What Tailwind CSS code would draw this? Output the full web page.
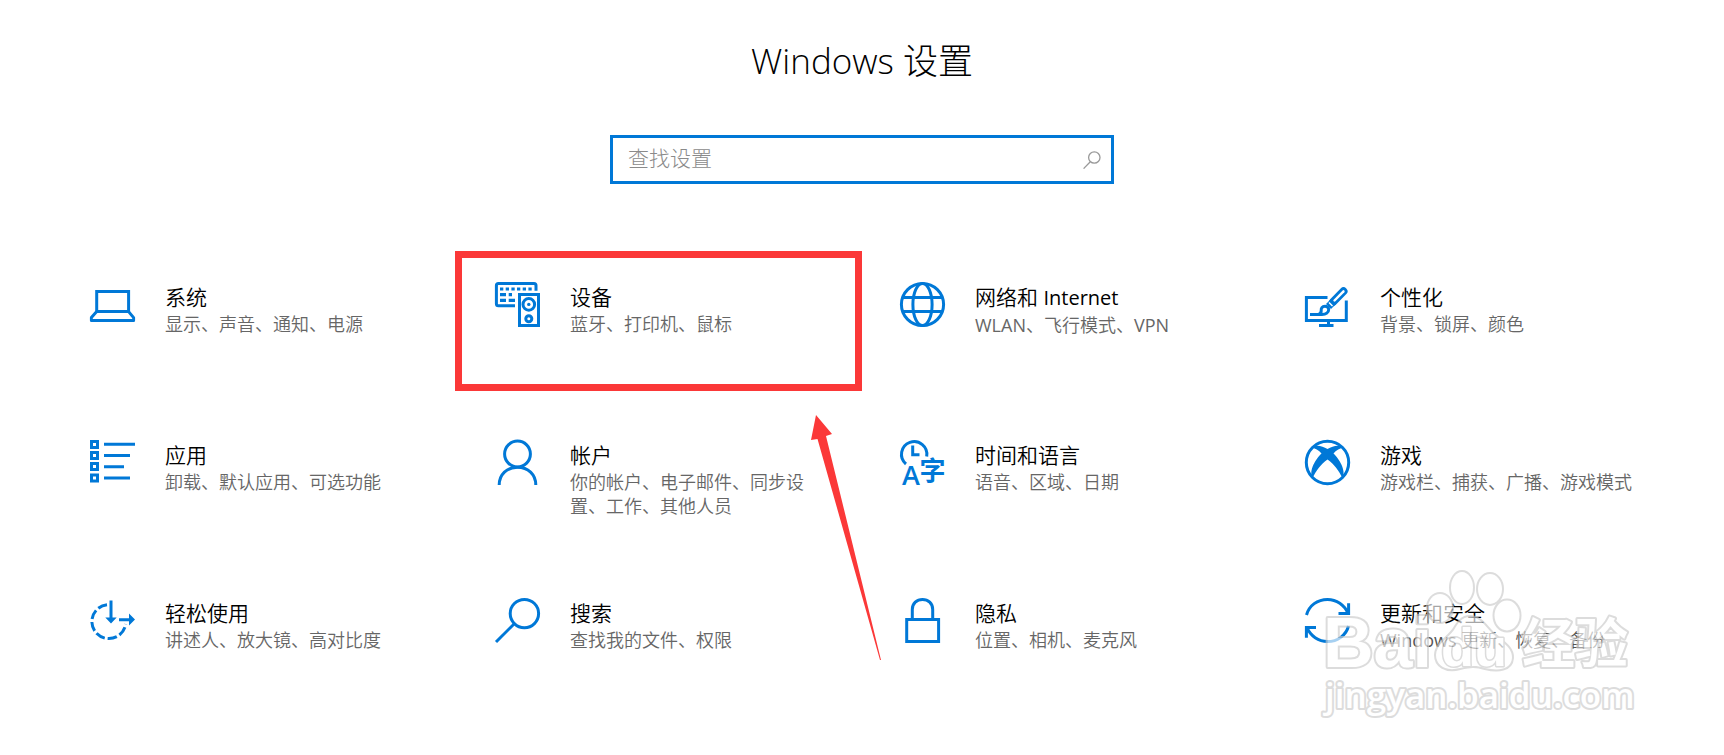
<!DOCTYPE html>
<html lang="zh-CN">
<head>
  <meta charset="utf-8"/>
  <meta name="viewport" content="width=device-width,initial-scale=1.0"/>
  <title>Windows 设置</title>
  <script src="https://cdn.jsdelivr.net/npm/@tailwindcss/browser@4"></script>
  <style>
    body { font-family: "Open Sans", "Noto Sans CJK SC", sans-serif; }
    .icon { width: 45px; height: 45px; flex: none; fill: none; stroke: #0078d7; stroke-width: 3; overflow: visible; }
  </style>
</head>
<body class="bg-white text-black min-h-screen overflow-x-hidden">
  <main class="pt-9">
    <h1 class="text-center text-[35px] leading-[50px] font-light">Windows 设置</h1>

    <form class="relative w-[504px] max-w-full mx-auto mt-[49px]">
      <input type="search" aria-label="查找设置" placeholder="查找设置" class="block w-full h-[49px] border-3 border-[#0078d7] bg-white pl-[15px] pr-12 pb-[3px] text-[21px] font-light outline-none placeholder:text-[#8a8a8a]"/>
      <button type="submit" aria-label="查找" class="absolute right-[13px] top-4">
        <svg class="w-[18px] h-[18px]" viewBox="0 0 18 18" fill="none" stroke="#999" stroke-width="1.3"><circle cx="11.3" cy="6.5" r="5.7"/><path d="M7.3 10.8L.6 17.6"/></svg>
      </button>
    </form>

    <nav class="mt-[67px] pl-[50px] pr-[54px] grid grid-cols-4 gap-y-[18px]">
      <a href="#system" class="flex gap-[30px] h-[140px] pt-[31px] pl-10 pr-[50px]">
        <svg class="icon" viewBox="0 0 45 45" stroke-linejoin="round"><path stroke-linejoin="miter" d="M6.7 9.4H38.6V29.6H6.7Z"/><path d="M6.7 29.6L1.4 35.6V38.4H43.6V35.6L38.6 29.6"/></svg>
        <div class="pt-px">
          <h2 class="text-[21px] leading-7 font-[350]">系统</h2>
          <p class="text-[18px] leading-6 font-[350] text-[#666] pt-px">显示、声音、通知、电源</p>
        </div>
      </a>

      <a href="#devices" class="relative flex gap-[30px] h-[140px] pt-[31px] pl-10 pr-[50px]">
        <!-- marco y flecha -->
        <span class="absolute inset-y-0 left-0 -right-0.5 border-7 border-[#fb3838]"></span>
        <svg class="absolute left-[355px] top-[163px] w-[72px] h-[246px] z-10" viewBox="0 0 72 246" fill="#fb3838"><path d="M6 1L22 20L16 22L71 246L70 246L7.5 25L1 26Z"/></svg>
        <svg class="icon" viewBox="0 0 45 45">
          <path d="M20 23.7H3.4Q1.4 23.7 1.4 21.7V3.4Q1.4 1.4 3.4 1.4H39Q41 1.4 41 3.4V8.7"/>
          <path stroke-width="3.2" d="M5 7H8.3M10.7 7H14M16.4 7H19.7M22 7H25.3M27.7 7H31M33.4 7H36.7M5 12.7H11M13.7 12.7H17M5 18.4H11M13.7 18.4H20"/>
          <path d="M24.5 12.5H43.5V43.5H24.5Z"/>
          <circle cx="33.8" cy="22.4" r="5.8"/><circle cx="33.8" cy="22.4" r="1.7" fill="#0078d7" stroke="none"/>
          <circle cx="33.8" cy="36.7" r="3"/>
        </svg>
        <div class="pt-px">
          <h2 class="text-[21px] leading-7 font-[350]">设备</h2>
          <p class="text-[18px] leading-6 font-[350] text-[#666] pt-px">蓝牙、打印机、鼠标</p>
        </div>
      </a>

      <a href="#network" class="flex gap-[30px] h-[140px] pt-[31px] pl-10 pr-[50px]">
        <svg class="icon" viewBox="0 0 45 45"><circle cx="22.5" cy="22.5" r="21.1"/><ellipse cx="22.5" cy="22.5" rx="9.6" ry="21.1"/><path d="M2.7 15.4H42.3M2.7 29.6H42.3"/></svg>
        <div class="pt-px">
          <h2 class="text-[21px] leading-7 font-[350]">网络和 <span class="text-[20px] font-normal">Internet</span></h2>
          <p class="text-[18px] leading-6 font-[350] text-[#666] pt-px"><span class="font-normal">WLAN</span>、飞行模式、<span class="font-normal">VPN</span></p>
        </div>
      </a>

      <a href="#personalization" class="flex gap-[30px] h-[140px] pt-[31px] pl-10 pr-[50px]">
        <svg class="icon" viewBox="0 0 45 45">
          <path d="M22.5 15.4H1.4V38.6H41.3V18.5M23.5 38.6V43.5M14 43.5H28.5"/>
          <path stroke-width="8" stroke-linecap="round" d="M38.5 9.3L28 20"/><path stroke-width="7" d="M28.5 19.5L23.5 24.5"/>
          <path stroke="#fff" stroke-width="2.4" stroke-linecap="round" d="M38.5 9.3L29.5 18.5"/>
          <path stroke="#fff" stroke-width="1.5" d="M24 20.5L27.5 24"/>
          <path d="M5 32.4H17C21 32.4 23.7 30.5 23.7 27.5C23.7 25.5 22 24.2 20 24.2C17 24.2 16 26.5 16.2 28.5C16.3 30.5 15.5 31.8 13.5 32.4"/>
        </svg>
        <div class="pt-px">
          <h2 class="text-[21px] leading-7 font-[350]">个性化</h2>
          <p class="text-[18px] leading-6 font-[350] text-[#666] pt-px">背景、锁屏、颜色</p>
        </div>
      </a>

      <a href="#apps" class="flex gap-[30px] h-[140px] pt-[31px] pl-10 pr-[50px]">
        <svg class="icon" viewBox="0 0 45 45"><path d="M1.5 1.5H7.5V7.5H1.5ZM1.5 12.5H7.5V18.5H1.5ZM1.5 23.5H7.5V29.5H1.5ZM1.5 35H7.5V41H1.5ZM14 4.3H45M14 15.5H40M14 26.7H34M14 38H40"/></svg>
        <div class="pt-px">
          <h2 class="text-[21px] leading-7 font-[350]">应用</h2>
          <p class="text-[18px] leading-6 font-[350] text-[#666] pt-px">卸载、默认应用、可选功能</p>
        </div>
      </a>

      <a href="#accounts" class="flex gap-[30px] h-[140px] pt-[31px] pl-10 pr-[50px]">
        <svg class="icon" viewBox="0 0 45 45"><circle cx="22.5" cy="14" r="12.9"/><path d="M4.2 45C4.2 34.5 12 27.2 22.5 27.2S40.8 34.5 40.8 45"/></svg>
        <div class="pt-px">
          <h2 class="text-[21px] leading-7 font-[350]">帐户</h2>
          <p class="text-[18px] leading-6 font-[350] text-[#666] pt-px">你的帐户、电子邮件、同步设置、工作、其他人员</p>
        </div>
      </a>

      <a href="#time" class="flex gap-[30px] h-[140px] pt-[31px] pl-10 pr-[50px]">
        <svg class="icon" viewBox="0 0 45 45">
          <path d="M6 24A12.7 12.7 0 1 1 26.7 16.5"/><path d="M12.7 5.5V14.7H19.5"/>
          <g fill="#0078d7" stroke="none"><text x="2" y="45" font-size="27" font-family="Open Sans" font-weight="600">A</text><text x="19.5" y="40" font-size="26" font-family="Noto Sans CJK SC" font-weight="700">字</text></g>
        </svg>
        <div class="pt-px">
          <h2 class="text-[21px] leading-7 font-[350]">时间和语言</h2>
          <p class="text-[18px] leading-6 font-[350] text-[#666] pt-px">语音、区域、日期</p>
        </div>
      </a>

      <a href="#gaming" class="flex gap-[30px] h-[140px] pt-[31px] pl-10 pr-7">
        <svg class="icon" viewBox="0 0 45 45"><circle cx="22.5" cy="22.5" r="21.2"/><path fill="#0078d7" stroke="none" d="M6 8C11 4 17 6 22.5 9C28 6 34 4 39 8C35 8 31 10 28.5 13.5C34 19 41.5 30 37.5 38C34 31 29 24 22.5 19.5C16 24 11 31 7.5 38C3.5 30 11 19 16.5 13.5C14 10 10 8 6 8Z"/></svg>
        <div class="pt-px">
          <h2 class="text-[21px] leading-7 font-[350]">游戏</h2>
          <p class="text-[18px] leading-6 font-[350] text-[#666] pt-px">游戏栏、捕获、广播、游戏模式</p>
        </div>
      </a>

      <a href="#ease" class="flex gap-[30px] h-[140px] pt-[31px] pl-10 pr-[50px]">
        <svg class="icon" viewBox="0 0 45 45">
          <path stroke-dasharray="9.5 3" d="M17 6.7A17 17 0 1 0 35.7 26"/>
          <path d="M21 2.5V22M29 21.7H41"/>
          <path fill="#0078d7" stroke="none" d="M15.3 19.5L21 25.5L26.7 19.5ZM39 15.5L45 21.5L39 27.5Z"/>
        </svg>
        <div class="pt-px">
          <h2 class="text-[21px] leading-7 font-[350]">轻松使用</h2>
          <p class="text-[18px] leading-6 font-[350] text-[#666] pt-px">讲述人、放大镜、高对比度</p>
        </div>
      </a>

      <a href="#search" class="flex gap-[30px] h-[140px] pt-[31px] pl-10 pr-[50px]">
        <svg class="icon" viewBox="0 0 45 45"><circle cx="29.4" cy="15.6" r="14.2"/><path d="M19.3 25.7L1 44"/></svg>
        <div class="pt-px">
          <h2 class="text-[21px] leading-7 font-[350]">搜索</h2>
          <p class="text-[18px] leading-6 font-[350] text-[#666] pt-px">查找我的文件、权限</p>
        </div>
      </a>

      <a href="#privacy" class="flex gap-[30px] h-[140px] pt-[31px] pl-10 pr-[50px]">
        <svg class="icon" viewBox="0 0 45 45"><path d="M6.7 21.4H38.6V43.5H6.7ZM12.3 21.4V11.5C12.3 5.5 16.8 1.4 22.5 1.4S32.7 5.5 32.7 11.5V21.4"/></svg>
        <div class="pt-px">
          <h2 class="text-[21px] leading-7 font-[350]">隐私</h2>
          <p class="text-[18px] leading-6 font-[350] text-[#666] pt-px">位置、相机、麦克风</p>
        </div>
      </a>

      <a href="#update" class="relative flex gap-[30px] h-[140px] pt-[31px] pl-10 pr-[50px]">
        <svg class="icon" viewBox="0 0 45 45"><path d="M1.5 17C4 7.5 12.5 1.4 22.5 1.4C31.5 1.4 39.5 7 43 15.3M43.6 5.3V15.5H33.5M43.5 28C41 37.5 32.5 43.6 22.5 43.6C13.5 43.6 5.5 38 2 29.7M1.4 39.7V29.5H11"/></svg>
        <div class="pt-px">
          <h2 class="text-[21px] leading-7 font-[350]">更新和安全</h2>
          <p class="text-[18px] leading-6 font-[350] text-[#555] pt-px"><span class="font-normal">Windows</span> 更新、恢复、备份</p>
        </div>
        <!-- marca de agua -->
        <svg class="absolute left-[15px] top-[-7px] w-[380px] h-[180px] pointer-events-none" viewBox="0 0 380 180" opacity=".65">
          <g fill="#fff" stroke="#cacaca" stroke-width="4" stroke-linejoin="round" paint-order="stroke" font-weight="700">
            <ellipse cx="160" cy="48" rx="12" ry="14"/>
            <ellipse cx="182" cy="27.5" rx="11" ry="15.5"/>
            <ellipse cx="210" cy="29" rx="12" ry="15"/>
            <ellipse cx="227" cy="55.5" rx="12.5" ry="15"/>
            <path d="M190 57C200 57 205 66 212 73C222 82 233 88 232 98C231 110 218 111 205 108C195 105 190 106 180 108C165 112 156 105 156 95C156 85 168 78 174 70C178 63 182 57 190 57Z"/>
            <text x="43" y="107" font-size="70" font-family="Liberation Sans">Bai</text>
            <text x="161" y="106" font-size="54" font-family="Liberation Sans" stroke-width="3">du</text>
            <text x="242" y="103" font-size="53" font-family="Noto Sans CJK SC">经验</text>
            <text x="45" y="148" font-size="35" font-family="Open Sans" font-weight="600">jingyan.baidu.com</text>
          </g>
        </svg>
      </a>
    </nav>
  </main>
</body>
</html>
